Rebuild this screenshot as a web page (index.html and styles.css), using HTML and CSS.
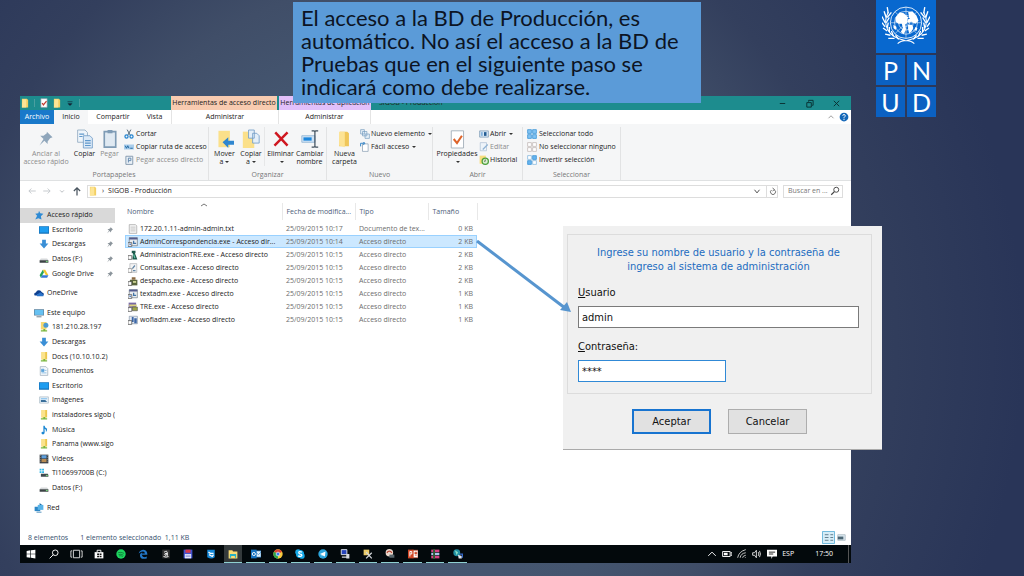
FILE: index.html
```html
<!DOCTYPE html>
<html lang="es">
<head>
    <meta charset="UTF-8">
    <meta name="viewport" content="width=device-width, initial-scale=1.0">
    <title>Acceso a SIGOB - Producción</title>
    <link rel="stylesheet" href="styles.css">
</head>
<body>

<!-- Shared icons -->
<svg class="sprite" aria-hidden="true">
    <symbol id="folder" viewBox="0 0 16 16"><path d="M3 1h8l2 2v12H3z" fill="#f3cf62"/><path d="M4 2h6v13H3z" fill="#fde596"/></symbol>
    <symbol id="desktop" viewBox="0 0 16 16"><path d="M0 2h16v12H0z" fill="#1572b8"/><path d="M1 3h14v9H1z" fill="#1e9df0"/></symbol>
    <symbol id="down" viewBox="0 0 16 16"><path d="M5 1h6v6h4l-7 8-7-8h4z" fill="#3a8fd6"/></symbol>
    <symbol id="drive" viewBox="0 0 16 16"><path d="M3 7h10l2 3H1z" fill="#d5d8da"/><path d="M1 10h14v4H1z" fill="#3b4245"/><path d="M11 11h3v2h-3z" fill="#78d07b"/></symbol>
    <symbol id="netfolder" viewBox="0 0 16 16"><path d="M4 0h9v12H4z" fill="#ecc64c"/><path d="M4 0h6v12H4z" fill="#fbe38c"/><path d="M3 13h10v2H3zM7 11h3v3H7z" fill="#79b63c"/></symbol>
    <symbol id="pin" viewBox="0 0 16 16"><path d="M9 2l5 5-2 1-2 3 0 2-3-3-5 5 4-6-3-3h3l3-2z" fill="#8b949b"/></symbol>
    <symbol id="pages" viewBox="0 0 22 24"><path d="M2 1h9l3 3v12H2z" fill="#eef5fb" stroke="#8fa9c0"/><path d="M9 8h8l3 3v12H9z" fill="#dceaf7" stroke="#6f9cc6"/><path d="M11 14h7M11 17h7M11 20h7M4 6h6M4 9h4" stroke="#5f98cc" stroke-width="1.4"/></symbol>
    <symbol id="app" viewBox="0 0 16 16"><path d="M2 1h13v13H2z" fill="#e8ebee" stroke="#64707c"/><path d="M2 1h13v3H2z" fill="#545b8e"/><path d="M8 6h2v3h3v2H8z" fill="#4375a8"/><path d="M0 9h6v6H0z" fill="#fff" stroke="#333"/><path d="M2 13l2-2M2 11h2v2" stroke="#245bb0" fill="none"/></symbol>
</svg>

<main class="slide">

    <section class="explorer">
        <header class="titlebar">
            <div class="quick">
                <svg class="icon"><use href="#folder"/></svg>
                <i></i>
                <svg class="icon" viewBox="0 0 16 16"><path d="M3 1h10v14H3z" fill="#fff" stroke="#8b9aa5"/><path d="M5 8l2 3 5-6" fill="none" stroke="#c23c30" stroke-width="2"/></svg>
                <svg class="icon"><use href="#folder"/></svg>
                <svg class="icon" viewBox="0 0 16 16"><path d="M4 6h8M5 9h6l-3 3z" stroke="#123" fill="#123"/></svg>
                <i></i>
            </div>
            <div class="context direct">Herramientas de acceso directo</div>
            <div class="context apps">Herramientas de aplicación</div>
            <div class="window-name">SIGOB - Producción</div>
            <div class="window-buttons">
                <button aria-label="Minimizar"><svg viewBox="0 0 10 10"><path d="M2 5h6" stroke="#082c2e"/></svg></button>
                <button aria-label="Restaurar"><svg viewBox="0 0 10 10"><path d="M2 4h5v5H2zM4 3V1.500h5V7H8" fill="none" stroke="#082c2e"/></svg></button>
                <button aria-label="Cerrar"><svg viewBox="0 0 10 10"><path d="M2 2l6 6M8 2L2 8" stroke="#082c2e"/></svg></button>
            </div>
        </header>

        <nav class="tabs">
            <a class="file" href="#">Archivo</a>
            <a class="active" href="#">Inicio</a>
            <a class="share" href="#">Compartir</a>
            <a class="view" href="#">Vista</a>
            <a class="manage" href="#">Administrar</a>
            <a class="manage-app" href="#">Administrar</a>
            <span class="tabs-end">
                <svg class="icon" viewBox="0 0 16 16"><path d="M4 10l4-4 4 4" fill="none" stroke="#999" stroke-width="1.500"/></svg>
                <svg class="icon" viewBox="0 0 16 16"><circle cx="8" cy="8" r="7" fill="#1467b8"/><path d="M6 6q0-2 2-2t2 2q0 1-2 3v1M8 11v2" fill="none" stroke="#fff" stroke-width="1.500"/></svg>
            </span>
        </nav>

        <div class="ribbon">
            <div class="group">
                <div class="tools">
                    <button class="big off pin-btn"><svg viewBox="0 0 22 24"><path d="M12 3l7 7-3 1-3 4 0 3-4-4-6 6 5-8-4-4h4l4-3z" fill="#8fa6bb"/></svg>Anclar al<br>acceso rápido</button>
                    <button class="big slim"><svg><use href="#pages"/></svg>Copiar</button>
                    <button class="big slim off"><svg viewBox="0 0 22 24"><path d="M4 3h14v19H4z" fill="#dfe9f2" stroke="#7e9bb5" stroke-width="2"/><path d="M8 1h6v4H8z" fill="#7e9bb5"/></svg>Pegar</button>
                    <div class="stack">
                        <button><svg class="icon" viewBox="0 0 16 16"><path d="M5 1l5 9M11 1L6 10" stroke="#4d6375" stroke-width="1.500"/><circle cx="4" cy="12" r="2.500" fill="none" stroke="#2484cf" stroke-width="2"/><circle cx="12" cy="12" r="2.500" fill="none" stroke="#2484cf" stroke-width="2"/></svg>Cortar</button>
                        <button><svg class="icon" viewBox="0 0 16 16"><path d="M0 4h16v8H0z" fill="#a9cdeb"/><path d="M2 6l2 4 2-4 2 4M10 10h4" fill="none" stroke="#1c659f" stroke-width="1.500"/></svg>Copiar ruta de acceso</button>
                        <button class="off"><svg class="icon" viewBox="0 0 16 16"><path d="M3 2h11v13H3z" fill="#eaf1f7" stroke="#8399ad" stroke-width="1.500"/><path d="M7 12V5h4v4H7" fill="none" stroke="#6086ad" stroke-width="1.500"/></svg>Pegar acceso directo</button>
                    </div>
                </div>
                <p>Portapapeles</p>
            </div>
            <div class="group">
                <div class="tools">
                    <button class="big"><svg viewBox="0 0 22 24"><path d="M3 2h14v20H3z" fill="#fbe08a"/><path d="M8 16l7-6v4h7v5h-7v4z" fill="#2f86cf"/></svg>Mover<br>a<b class="caret"></b></button>
                    <button class="big split"><svg viewBox="0 0 22 24"><path d="M1 3h14v20H1z" fill="#fbe08a"/><path d="M8 1h7v10H8zM13 5h5l3 3v9h-8z" fill="#e4eff9" stroke="#6f9cc6"/></svg>Copiar<br>a<b class="caret"></b></button>
                    <button class="big wide"><svg viewBox="0 0 22 24"><path d="M4 4l15 16M19 4L3 20" stroke="#cf1720" stroke-width="3"/></svg>Eliminar<br><b class="caret"></b></button>
                    <button class="big"><svg viewBox="0 0 22 24"><path d="M1 8h16v8H1z" fill="#cfe3f5" stroke="#8fb3d3"/><path d="M3 10h10v4H3z" fill="#1c86dc"/><path d="M17 3v18M13 2h3l1 1 1-1h3M13 22h3l1-1 1 1h3" fill="none" stroke="#40505e" stroke-width="1.500"/></svg>Cambiar<br>nombre</button>
                </div>
                <p>Organizar</p>
            </div>
            <div class="group">
                <div class="tools">
                    <button class="big wide"><svg viewBox="0 0 22 24"><path d="M6 3h9l2 2v16H5z" fill="#efc65a"/><path d="M5 3h7v19l-7-2z" fill="#fde394"/></svg>Nueva<br>carpeta</button>
                    <div class="stack tight">
                        <button><svg class="icon" viewBox="0 0 16 16"><path d="M1 1h6v7H1zM4 4h7v7H4zM8 8h7v7H8z" fill="#e6f0f8" stroke="#6b95ba"/></svg>Nuevo elemento<b class="caret"></b></button>
                        <button><svg class="icon" viewBox="0 0 16 16"><path d="M4 3h9v12H4z" fill="#fff" stroke="#7891a6"/><path d="M1 7V2h6M5 0l3 2-3 3" fill="none" stroke="#2a7fc5" stroke-width="1.500"/></svg>Fácil acceso<b class="caret"></b></button>
                    </div>
                </div>
                <p>Nuevo</p>
            </div>
            <div class="group">
                <div class="tools">
                    <button class="big props"><svg viewBox="0 0 22 24"><path d="M4 2h15v21H4z" fill="#fff" stroke="#9ba8b3"/><path d="M7 12l4 5 6-9" fill="none" stroke="#dd6329" stroke-width="2.500"/></svg>Propiedades<br><b class="caret"></b></button>
                    <div class="stack tight">
                        <button><svg class="icon" viewBox="0 0 16 16"><path d="M1 3h14v10H1z" fill="#d7e7f5" stroke="#688aa8"/><path d="M8 5h4v6H8z" fill="#245c92"/><path d="M3 5h3v6H3z" fill="#84b2dc"/></svg>Abrir<b class="caret"></b></button>
                        <button class="off"><svg class="icon" viewBox="0 0 16 16"><path d="M2 1h10v13H2z" fill="#eef4fa" stroke="#a3b9ce"/><path d="M6 12l8-8" stroke="#8fb2d4" stroke-width="2"/></svg>Editar</button>
                        <button><svg class="icon" viewBox="0 0 16 16"><path d="M1 1h10v13H1z" fill="#f7dd7d"/><circle cx="10" cy="10" r="5" fill="#d9f0d0" stroke="#4b9e3a" stroke-width="2"/><path d="M10 7v3h-2" fill="none" stroke="#333"/></svg>Historial</button>
                    </div>
                </div>
                <p>Abrir</p>
            </div>
            <div class="group">
                <div class="tools">
                    <div class="stack">
                        <button><svg class="icon" viewBox="0 0 16 16"><path d="M1 1h6v6H1zM9 1h6v6H9zM1 9h6v6H1zM9 9h6v6H9z" fill="#84c4f3" stroke="#1c83d0"/></svg>Seleccionar todo</button>
                        <button><svg class="icon" viewBox="0 0 16 16"><path d="M1 1h6v6H1zM9 1h6v6H9zM1 9h6v6H1zM9 9h6v6H9z" fill="#fff" stroke="#b5aaa6"/></svg>No seleccionar ninguno</button>
                        <button><svg class="icon" viewBox="0 0 16 16"><path d="M1 1h6v6H1zM9 9h6v6H9z" fill="#fff" stroke="#6aa8d8"/><path d="M9 1h6v6H9zM1 9h6v6H1z" fill="#68b5ef" stroke="#1c83d0"/></svg>Invertir selección</button>
                    </div>
                </div>
                <p>Seleccionar</p>
            </div>
        </div>

        <div class="navbar">
            <svg class="icon" viewBox="0 0 16 16"><path d="M14 8H3M7 4L3 8l4 4" fill="none" stroke="#c3c8cc" stroke-width="1.500"/></svg>
            <svg class="icon" viewBox="0 0 16 16"><path d="M2 8h11M9 4l4 4-4 4" fill="none" stroke="#c3c8cc" stroke-width="1.500"/></svg>
            <svg class="icon" viewBox="0 0 16 16"><path d="M5 7l3 3 3-3" fill="none" stroke="#b4b9bd" stroke-width="1.500"/></svg>
            <svg class="icon" viewBox="0 0 16 16"><path d="M8 15V3M3 8l5-5 5 5" fill="none" stroke="#48545e" stroke-width="2"/></svg>
            <div class="address">
                <svg class="icon"><use href="#folder"/></svg>
                <span>›</span>
                <span>SIGOB - Producción</span>
                <svg class="icon last" viewBox="0 0 16 16"><path d="M4 6l4 5 4-5" fill="none" stroke="#444" stroke-width="1.500"/></svg>
                <svg class="refresh" viewBox="0 0 16 16"><path d="M5 5a5 5 0 1 0 6 0M7 1l4 3-4 3" fill="none" stroke="#444" stroke-width="1.500"/></svg>
            </div>
            <label class="search">
                <input type="text" placeholder="Buscar en ..." aria-label="Buscar">
                <svg class="icon" viewBox="0 0 16 16"><circle cx="10" cy="6" r="4" fill="none" stroke="#444" stroke-width="1.500"/><path d="M7 9l-5 5" stroke="#444" stroke-width="2"/></svg>
            </label>
        </div>

        <div class="content">
            <ul class="tree">
                <li class="root selected"><a href="#"><svg class="icon" viewBox="0 0 16 16"><path d="M8 1l2 4 5 1-4 4 1 5-5-2-5 2 3-6-3-3 5-1z" fill="#2e8ad4"/></svg>Acceso rápido</a></li>
                <li><a href="#"><svg class="icon"><use href="#desktop"/></svg>Escritorio</a><svg class="pin"><use href="#pin"/></svg></li>
                <li><a href="#"><svg class="icon"><use href="#down"/></svg>Descargas</a><svg class="pin"><use href="#pin"/></svg></li>
                <li><a href="#"><svg class="icon"><use href="#drive"/></svg>Datos (F:)</a><svg class="pin"><use href="#pin"/></svg></li>
                <li><a href="#"><svg class="icon" viewBox="0 0 16 16"><path d="M6 1h4l5 9h-4z" fill="#f5c72f"/><path d="M6 1l2 4-5 9-2-4z" fill="#27a45c"/><path d="M5 10h10l-2 4H3z" fill="#3878d7"/></svg>Google Drive</a><svg class="pin"><use href="#pin"/></svg></li>
                <li class="root space"><a href="#"><svg class="icon" viewBox="0 0 16 16"><path d="M1 12q-2-4 2-5 2-5 7-3l3 3q4 1 2 5z" fill="#0d3f8f"/><path d="M5 13q-2-4 2-4 3-4 6 0 3 1 2 4z" fill="#2a73c9"/></svg>OneDrive</a></li>
                <li class="root space"><a href="#"><svg class="icon" viewBox="0 0 16 16"><path d="M0 2h16v10H0z" fill="#5d7d96"/><path d="M1 3h14v8H1z" fill="#66c1f2"/><path d="M4 13h8v2H4z" fill="#8899a5"/></svg>Este equipo</a></li>
                <li><a href="#"><svg class="icon" viewBox="0 0 16 16"><path d="M3 0h9v12H3z" fill="#f6d870"/><circle cx="11" cy="5" r="4" fill="#4a9ad4"/><path d="M3 13h10v2H3zM7 11h3v3H7z" fill="#79b63c"/></svg>181.210.28.197</a></li>
                <li><a href="#"><svg class="icon"><use href="#down"/></svg>Descargas</a></li>
                <li><a href="#"><svg class="icon"><use href="#netfolder"/></svg>Docs (10.10.10.2)</a></li>
                <li><a href="#"><svg class="icon" viewBox="0 0 16 16"><path d="M2 1h9l3 3v11H2z" fill="#f4f8fb" stroke="#8fa1b0"/><path d="M4 5h4v4H4zM4 11h8M9 7h3" fill="#5ba2d9" stroke="#5ba2d9"/></svg>Documentos</a></li>
                <li><a href="#"><svg class="icon"><use href="#desktop"/></svg>Escritorio</a></li>
                <li><a href="#"><svg class="icon" viewBox="0 0 16 16"><path d="M1 3h14v10H1z" fill="#eaf3fa" stroke="#9fb0bd"/><path d="M3 5h10v2H3z" fill="#8bc4ee"/><path d="M3 8h7l3 3H3z" fill="#396f9b"/></svg>Imágenes</a></li>
                <li><a href="#"><svg class="icon"><use href="#netfolder"/></svg>instaladores sigob (</a></li>
                <li><a href="#"><svg class="icon" viewBox="0 0 16 16"><path d="M7 1h2q0 3 4 5 0 4-2 5 1-4-2-5v6q0 3-3 3-3-1-2-3 1-2 3-1z" fill="#1b87d2"/></svg>Música</a></li>
                <li><a href="#"><svg class="icon"><use href="#netfolder"/></svg>Panama (www.sigo</a></li>
                <li><a href="#"><svg class="icon" viewBox="0 0 16 16"><path d="M1 1h14v14H1z" fill="#3b4046"/><path d="M4 2h8v5H4z" fill="#5e9edb"/><path d="M4 8h8v5H4z" fill="#b98c53"/><path d="M2 2v12M14 2v12" stroke="#ddd" stroke-dasharray="1 2"/></svg>Vídeos</a></li>
                <li><a href="#"><svg class="icon" viewBox="0 0 16 16"><path d="M1 1h3v3H1zM5 1h3v3H5zM1 5h3v3H1zM5 5h3v3H5z" fill="#30b7e8"/><path d="M3 9h11l1 2v3H3z" fill="#414a50"/><path d="M11 11h3v2h-3z" fill="#78d07b"/></svg>TI10699700B (C:)</a></li>
                <li><a href="#"><svg class="icon"><use href="#drive"/></svg>Datos (F:)</a></li>
                <li class="root space"><a href="#"><svg class="icon" viewBox="0 0 16 16"><path d="M1 6h9v7H1z" fill="#2b86c6"/><path d="M6 3h9v8H6z" fill="#58b3e8"/><path d="M9 0l4 3H9zM4 14h8v1H4z" fill="#1e6fa8"/></svg>Red</a></li>
            </ul>

            <div class="files">
                <table>
                    <colgroup><col class="c-name"><col class="c-date"><col class="c-type"><col class="c-size"></colgroup>
                    <thead>
                        <tr>
                            <th>Nombre<svg class="sort" viewBox="0 0 8 4"><path d="M1 3l3-2 3 2" fill="none" stroke="#777"/></svg></th>
                            <th>Fecha de modifica...</th><th>Tipo</th><th>Tamaño</th>
                        </tr>
                    </thead>
                    <tbody>
                        <tr><td><svg class="icon" viewBox="0 0 16 16"><path d="M2 1h10l2 2v12H2z" fill="#f5f5f5" stroke="#999"/><path d="M4 5h8M4 8h8M4 11h8" stroke="#aaa"/></svg>172.20.1.11-admin-admin.txt</td><td>25/09/2015 10:17</td><td>Documento de tex...</td><td>0 KB</td></tr>
                        <tr class="selected"><td><svg class="icon"><use href="#app"/></svg>AdminCorrespondencia.exe - Acceso dir...</td><td>25/09/2015 10:14</td><td>Acceso directo</td><td>2 KB</td></tr>
                        <tr><td><svg class="icon" viewBox="0 0 16 16"><path d="M6 1h6v4H6zM8 5h3l4 10H7z" fill="#1f5a4c"/><path d="M9 7l2 6" stroke="#5ec2a3" stroke-width="2"/><path d="M0 9h6v6H0z" fill="#fff" stroke="#333"/></svg>AdministracionTRE.exe - Acceso directo</td><td>25/09/2015 10:15</td><td>Acceso directo</td><td>2 KB</td></tr>
                        <tr><td><svg class="icon" viewBox="0 0 16 16"><path d="M3 1h11v14H3z" fill="#f4f4f4" stroke="#a8acb0"/><path d="M7 9l4-5M8 12h4" stroke="#6286a6" stroke-width="2"/><path d="M0 9h6v6H0z" fill="#fff" stroke="#777"/></svg>Consultas.exe - Acceso directo</td><td>25/09/2015 10:15</td><td>Acceso directo</td><td>2 KB</td></tr>
                        <tr><td><svg class="icon" viewBox="0 0 16 16"><path d="M3 6h12v9H3z" fill="#59653b"/><path d="M6 2h6v4H6z" fill="#8b6b43"/><path d="M8 8h5v3H8z" fill="#c9cf91"/><path d="M0 9h6v6H0z" fill="#fff" stroke="#333"/></svg>despacho.exe - Acceso directo</td><td>25/09/2015 10:15</td><td>Acceso directo</td><td>2 KB</td></tr>
                        <tr><td><svg class="icon"><use href="#app"/></svg>textadm.exe - Acceso directo</td><td>25/09/2015 10:15</td><td>Acceso directo</td><td>1 KB</td></tr>
                        <tr><td><svg class="icon" viewBox="0 0 16 16"><path d="M1 1h12v8H1z" fill="#786aa5"/><path d="M2 4h12v3H2z" fill="#ddd37e"/><path d="M7 8h8v6H7z" fill="#9fa647" stroke="#555"/><path d="M0 9h6v6H0z" fill="#fff" stroke="#333"/></svg>TRE.exe - Acceso directo</td><td>25/09/2015 10:15</td><td>Acceso directo</td><td>1 KB</td></tr>
                        <tr><td><svg class="icon" viewBox="0 0 16 16"><path d="M2 2h13v12H2z" fill="#e4eaf2" stroke="#7b8da1"/><path d="M6 3h3v8H6zM10 5h4v8h-4z" fill="#3c67a7"/><path d="M0 9h6v6H0z" fill="#fff" stroke="#333"/></svg>wofiadm.exe - Acceso directo</td><td>25/09/2015 10:15</td><td>Acceso directo</td><td>1 KB</td></tr>
                    </tbody>
                </table>
            </div>
        </div>

        <footer class="status">
            <span>8 elementos</span>
            <span>1 elemento seleccionado&nbsp; 1,11 KB</span>
            <span class="views">
                <svg viewBox="0 0 14 14"><path d="M0.500 0.500h13v13H0.500z" fill="#d5edf8" stroke="#62b3d9"/><path d="M3 4h4M3 7h4M3 10h4M9 4h3M9 7h3M9 10h3" stroke="#5c7888"/></svg>
                <svg viewBox="0 0 14 14"><path d="M3 4h8v6H3z" fill="#dbe8f0" stroke="#b5c2ca"/><path d="M3 6h6v3H3z" fill="#4a6573"/></svg>
            </span>
        </footer>

        <div class="taskbar">
            <div class="apps-row">
                <button aria-label="Inicio"><svg viewBox="0 0 16 16"><path d="M1 3l6-1v5.500H1zM8 2l7-1v6.500H8zM1 8.500h6V14l-6-1zM8 8.500h7V15l-7-1z" fill="#fff"/></svg></button>
                <button aria-label="Buscar"><svg viewBox="0 0 16 16"><circle cx="10" cy="6" r="4.500" fill="none" stroke="#fff" stroke-width="1.500"/><path d="M7 9l-6 6" stroke="#fff" stroke-width="1.500"/></svg></button>
                <button aria-label="Vista de tareas"><svg class="task-view" viewBox="0 0 20 16"><path d="M5 2h10v12H5zM3 3H1v10h2M17 3h2v10h-2" fill="none" stroke="#ddd" stroke-width="1.500"/></svg></button>
                <button aria-label="Tienda"><svg viewBox="0 0 16 16"><path d="M1 5h14v10H1z" fill="#fff"/><path d="M5 5V2h6v3" fill="none" stroke="#fff" stroke-width="1.500"/><path d="M5 7h3v3H5zM9 7h3v3H9zM5 11h3v2H5zM9 11h3v2H9z" fill="#111"/></svg></button>
                <button aria-label="Spotify"><svg viewBox="0 0 16 16"><circle cx="8" cy="8" r="7.500" fill="#1ed760"/><path d="M3 6q5-2 10 1M4 9q4-2 8 1M5 11q3-1 6 1" fill="none" stroke="#0a5a29"/></svg></button>
                <button aria-label="Edge"><svg viewBox="0 0 16 16"><path d="M1 7q2-6 8-6 6 1 6 8H6q1 4 5 4l3-1v3q-11 3-11-6 1-3 4-4-1 1-1 2h5q0-3-3-3-4 0-7 3z" fill="#2378c8"/></svg></button>
                <button aria-label="Amazon"><svg viewBox="0 0 16 16"><path d="M2 1h12v14H2z" fill="#333"/><path d="M5 5q5-3 5 1v5M10 7q-5 0-4 2 2 3 4-1M4 12q4 2 8 0" fill="none" stroke="#fff" stroke-width="1.500"/></svg></button>
                <button aria-label="Guardar"><svg viewBox="0 0 16 16"><path d="M1 1h14v14H1z" fill="#4353ce"/><path d="M4 1h8v5H4z" fill="#d83a4c"/><path d="M3 8h10v7H3z" fill="#e6e8fa"/><path d="M4 10h8M4 12h8" stroke="#7b84d3"/></svg></button>
                <button aria-label="TeamViewer"><svg viewBox="0 0 16 16"><path d="M2 1h12v12q-5 4-12 0z" fill="#1689d8"/><path d="M4 5l3 2h5M5 9l5 3 2-3" stroke="#fff" stroke-width="2" fill="none"/></svg></button>
                <button class="open current" aria-label="Explorador"><svg viewBox="0 0 16 16"><path d="M1 2h6l1 2h7v11H1z" fill="#fbdb72"/><path d="M3 8h10v6h-2v-3H5v3H3z" fill="#27b1c4"/></svg></button>
                <button class="open" aria-label="Outlook"><svg viewBox="0 0 16 16"><path d="M7 3h9v10H7z" fill="#e6f1fa" stroke="#1673c1"/><path d="M7 5l5 4 4-4" fill="none" stroke="#1673c1"/><path d="M0 1h9v14H0z" fill="#1673c1"/><circle cx="4.500" cy="8" r="2.500" fill="none" stroke="#fff" stroke-width="1.500"/></svg></button>
                <button class="open" aria-label="Chrome"><svg viewBox="0 0 16 16"><circle cx="8" cy="8" r="7.500" fill="#f8c83b"/><path d="M8 8L1.500 4.500A7.500 7.500 0 0 1 14.500 4.500z" fill="#de4335"/><path d="M8 8L1.500 4.500A7.500 7.500 0 0 0 8 15.500z" fill="#2da44e"/><circle cx="8" cy="8" r="3" fill="#3b7ded" stroke="#fff"/></svg></button>
                <button class="open" aria-label="Skype"><svg viewBox="0 0 16 16"><circle cx="5" cy="5" r="4.500" fill="#17a9e8"/><circle cx="11" cy="11" r="4.500" fill="#17a9e8"/><circle cx="8" cy="8" r="6.500" fill="#17a9e8"/><path d="M11 5q-5-2-5 1 0 1 2 2 3 0 3 2-1 3-6 1" fill="none" stroke="#fff" stroke-width="2"/></svg></button>
                <button class="open" aria-label="Telegram"><svg viewBox="0 0 16 16"><circle cx="8" cy="8" r="7.500" fill="#2ca5dc"/><path d="M3 8l9-4-1 8-4-2-1 2v-3z" fill="#fff"/></svg></button>
                <button class="open" aria-label="Escritorio remoto"><svg viewBox="0 0 16 16"><path d="M2 1h9v8H2z" fill="#2745bc" stroke="#dfe2ea" stroke-width="1.500"/><path d="M3 12h7v2H3zM10 8h5v7h-5z" fill="#d6d9df"/></svg></button>
                <button class="open" aria-label="Herramientas"><svg viewBox="0 0 16 16"><path d="M1 1h9v9H1z" fill="#eacb69"/><path d="M5 5l9 10M14 6L5 15" stroke="#d5d8db" stroke-width="2"/></svg></button>
                <button class="open" aria-label="Chat"><svg viewBox="0 0 16 16"><circle cx="7" cy="6" r="6" fill="#ead8cc"/><path d="M3 6q4-5 8 0" fill="none" stroke="#b54433" stroke-width="2"/><path d="M7 9h8v5H7z" fill="#59666c"/></svg></button>
                <button class="open" aria-label="PowerPoint"><svg viewBox="0 0 16 16"><path d="M7 2h9v12H7z" fill="#fff" stroke="#d24726"/><path d="M11 5h3v3h-3zM11 10h3" fill="#d24726" stroke="#d24726"/><path d="M0 1h9v14H0z" fill="#d24726"/><path d="M3 12V4h3v4H3" fill="none" stroke="#fff" stroke-width="1.500"/></svg></button>
                <button class="open" aria-label="WinRAR"><svg viewBox="0 0 16 16"><path d="M2 1h13v4H2z" fill="#d64080"/><path d="M2 6h13v4H2z" fill="#a9c6e9"/><path d="M2 11h13v4H2z" fill="#d64080"/><path d="M5 0h3v16H5z" fill="#2d5a33"/></svg></button>
                <button class="open" aria-label="Red"><svg viewBox="0 0 16 16"><circle cx="6" cy="6" r="5.500" fill="#228ea1"/><path d="M3 2l5 3-2 5z" fill="#8ae0c5"/><path d="M8 9l6 2v4H9z" fill="#e4e7ed"/><path d="M11 8h4v6" fill="none" stroke="#3668c8" stroke-width="2"/></svg></button>
            </div>
            <div class="tray">
                <svg viewBox="0 0 16 16"><path d="M2 11l6-6 6 6" fill="none" stroke="#fff" stroke-width="1.500"/></svg>
                <svg viewBox="0 0 16 16"><path d="M1 4h12v8H1zM14 6h2v4h-2" fill="none" stroke="#fff" stroke-width="1.500"/><path d="M3 6h6v4H3z" fill="#fff"/></svg>
                <svg viewBox="0 0 16 16"><path d="M1 14Q3 4 14 1M5 14q1-7 9-8M9 14q0-3 5-4M13 14l1-1" fill="none" stroke="#ccc" stroke-width="1.500"/></svg>
                <svg viewBox="0 0 16 16"><path d="M1 6h3l3-4v12l-3-4H1zM10 5q2 3 0 6M12 3q3 5 0 10" fill="none" stroke="#ddd" stroke-width="1.500"/></svg>
                <svg viewBox="0 0 16 16"><path d="M0 1h16v11H9l-2 4v-4H0z" fill="#fff"/><path d="M3 5h10M3 8h7" stroke="#222" stroke-width="1.500"/></svg>
                <span>ESP</span>
                <time>17:50</time>
            </div>
        </div>
    </section>

    <p class="callout">El acceso a la BD de Producción, es<br>automático. No así el acceso a la BD de<br>Pruebas que en el siguiente paso se<br>indicará como debe realizarse.</p>

    <div class="logo">
        <div class="emblem">
            <svg viewBox="0 0 46 38">
                <g fill="none" stroke="#fff">
                    <circle cx="23" cy="17" r="15" stroke-width="0.800"/>
                    <circle cx="23" cy="17" r="11" stroke-width="0.600"/>
                    <circle cx="23" cy="17" r="7" stroke-width="0.600"/>
                    <circle cx="23" cy="17" r="3.500" stroke-width="0.600"/>
                    <path d="M23 2v30M8 17h30M12.500 6.500l21 21M33.500 6.500l-21 21" stroke-width="0.500"/>
                    <path d="M6 7C0 18 5 31 22 34c4 0 7 1 9 3M40 7c6 11 1 24-16 27-4 0-7 1-9 3"/>
                    <path d="M6 8L5 2M4 12L2 6M3 17l-3-6M3 21l-3-4M5 25l-4-3M8 29l-5-1M12 32l-6 0M5 12l4-5M4 17l3-5M5 22l1-5M7 26l0-5M11 30l-2-5M16 33l-3-4M40 8l1-6M42 12l2-6M43 17l3-6M43 21l3-4M41 25l4-3M38 29l5-1M34 32l6 0M41 12l-4-5M42 17l-3-5M41 22l-1-5M39 26l0-5M35 30l2-5M30 33l3-4" stroke-width="1.300"/>
                </g>
                <path d="M21 8l-4-1-4 5 0 4 3 2 3 0 1 4-2 4 3 2 2-5-1-4 2-2 1-3 2-1-3-2zM25 7l4-1 4 4 2 5-3 3-4-2-3 1-1-3 2-3zM25 19l4 0 1 3-2 4-2 1-1-4zM32 21l2 1-1 3-2-1zM11 19l3 2-1 3-2-2z" fill="#fff"/>
            </svg>
        </div>
        <span>P</span><span>N</span><span>U</span><span>D</span>
    </div>

    <form class="login">
        <fieldset>
            <p>Ingrese su nombre de usuario y la contraseña de ingreso al sistema de administración</p>
            <label for="user"><u>U</u>suario</label>
            <input id="user" type="text" value="admin">
            <label for="pass"><u>C</u>ontraseña:</label>
            <input id="pass" class="short" type="text" value="****" autocomplete="off">
        </fieldset>
        <div class="actions">
            <button class="default" type="button">Aceptar</button>
            <button type="button">Cancelar</button>
        </div>
    </form>

    <svg class="arrow" viewBox="0 0 96 74" aria-hidden="true">
        <path d="M1 1l88 67" stroke="#5795cf" stroke-width="3"/>
        <path d="M95 72l-11-2 7-8z" fill="#5795cf"/>
    </svg>

</main>

</body>
</html>
```

FILE: styles.css
```css
* {
    box-sizing: border-box;
}
body {
    margin: 0;
    font-family: "Open Sans", "Noto Sans", sans-serif;
    font-size: 7px;
    line-height: 8px;
    color: #222;
}
button, input {
    font: inherit;
    color: inherit;
}
button {
    border: none;
    background: none;
    padding: 0;
}
a {
    color: inherit;
    text-decoration: none;
}
p {
    margin: 0;
}
svg {
    display: block;
    flex: none;
}
.sprite {
    position: absolute;
    width: 0;
    height: 0;
}
.icon {
    width: 10px;
    height: 10px;
}
.slide {
    position: relative;
    display: flex;
    min-height: 100vh;
    padding: 96px 173px 13px 20px;
    background: radial-gradient(ellipse 60% 110% at 40% 60%, #4a5c75 0%, #44556f 45%, #404e68 58%, #333f5d 74%, #293558 100%);
}

/* Explorer window */
.explorer {
    flex: 1;
    display: flex;
    flex-direction: column;
    min-width: 0;
    background: #fff;
}
.titlebar {
    display: flex;
    height: 14px;
    line-height: 13px;
    background: #1d8c8e;
}
.quick {
    display: flex;
    align-items: center;
    gap: 3px;
    width: 151px;
}
.quick i {
    width: 1px;
    height: 8px;
    margin: 0 1px;
    background: #4a9fa0;
}
.context {
    text-align: center;
    white-space: nowrap;
}
.direct {
    width: 106px;
    margin-right: 2px;
    background: #f8cbb0;
}
.apps {
    width: 92px;
    background: #e2c0fa;
}
.window-name {
    flex: 1;
    padding-left: 8px;
}
.window-buttons {
    display: flex;
    gap: 18px;
    padding-right: 10px;
}
.window-buttons svg {
    width: 9px;
    height: 9px;
}
.tabs {
    display: flex;
    height: 14px;
    line-height: 14px;
    text-align: center;
}
.file, .active {
    width: 34px;
}
.file {
    background: #1979ca;
    color: #fff;
}
.active {
    background: #f5f6f7;
}
.share {
    width: 50px;
}
.view {
    width: 33px;
}
.manage {
    width: 108px;
    border: solid #e4e4e4;
    border-width: 0 1px;
}
.manage-app {
    width: 92px;
    border-right: 1px solid #e4e4e4;
}
.tabs-end {
    display: flex;
    align-items: center;
    gap: 3px;
    margin-left: auto;
    padding-right: 2px;
}
.ribbon {
    display: grid;
    grid-template-columns: 189px 118px 106px 90px 98px;
    height: 57px;
    padding-top: 3px;
    background: #f5f6f7;
    border-bottom: 1px solid #dfe1e2;
}
.group {
    display: flex;
    flex-direction: column;
    justify-content: space-between;
    border-right: 1px solid #e2e3e4;
}
.group p {
    text-align: center;
    color: #777;
    padding-bottom: 1px;
}
.tools {
    display: flex;
    white-space: nowrap;
}
.group + .group .tools {
    padding-left: 2px;
}
.big {
    display: block;
    width: 27px;
    text-align: center;
}
.big svg {
    width: 18px;
    height: 20px;
    margin: 2px auto 1px;
}
.slim {
    width: 25px;
    align-self: flex-start;
}
.pin-btn {
    width: 52px;
}
.wide {
    width: 31px;
}
.props {
    width: 44px;
}
.split {
    border-right: 1px solid #e6e7e8;
}
.off {
    color: #8c8c8c;
}
.caret {
    display: inline-block;
    margin-left: 2px;
    border: 2px solid transparent;
    border-top-color: #333;
    border-bottom: none;
    vertical-align: 1px;
}
.stack {
    display: flex;
    flex-direction: column;
    padding-left: 2px;
}
.tight {
    padding-left: 0;
}
.stack button {
    display: flex;
    align-items: center;
    gap: 2px;
    height: 13px;
}
.tight button {
    gap: 1px;
}
.navbar {
    display: flex;
    align-items: center;
    gap: 5px;
    height: 20px;
    padding: 0 8px 0 7px;
}
.address, .search {
    display: flex;
    align-items: center;
    height: 13px;
    border: 1px solid #ddd;
}
.address {
    flex: 1;
    gap: 4px;
}
.last {
    margin-left: auto;
}
.refresh {
    width: 11px;
    height: 11px;
    padding-left: 2px;
    border-left: 1px solid #ddd;
}
.search {
    width: 60px;
    padding-left: 4px;
}
.search input {
    width: 42px;
    padding: 0;
    border: none;
    outline: none;
}
.search input::placeholder {
    color: #777;
}
.content {
    flex: 1;
    display: flex;
}
.tree {
    display: flex;
    flex-direction: column;
    width: 95px;
    margin: 0;
    padding: 7px 0 15px;
    list-style: none;
}
.tree li {
    flex: 1;
    display: flex;
    align-items: center;
    padding: 0 1px 0 19px;
    overflow: hidden;
}
.tree .root {
    padding-left: 14px;
}
.tree .space {
    margin-top: 5px;
}
.tree a {
    flex: 1;
    display: flex;
    align-items: center;
    gap: 3px;
    white-space: nowrap;
}
.tree .selected {
    background: #d9d9d9;
}
.pin {
    width: 8px;
    height: 8px;
}
.files {
    flex: 1;
    padding: 2px 0 0 10px;
}
table {
    table-layout: fixed;
    width: 352px;
    border-collapse: collapse;
}
.c-name {
    width: 157px;
}
.c-date {
    width: 73px;
}
.c-type {
    width: 73px;
}
.c-size {
    width: 49px;
}
th {
    height: 17px;
    padding: 0 4px;
    border-right: 1px solid #e8e8e8;
    text-align: left;
    font-weight: 400;
    color: #4c607a;
    white-space: nowrap;
    position: relative;
}
th:first-child {
    padding-left: 2px;
}
.sort {
    position: absolute;
    top: 0;
    left: 48%;
    width: 8px;
    height: 4px;
}
td {
    height: 13px;
    padding: 0 4px;
    color: #6d6d6d;
    white-space: nowrap;
}
td:first-child {
    display: flex;
    align-items: center;
    gap: 2px;
    padding: 0 3px;
    color: #222;
}
td:last-child {
    text-align: right;
}
tbody::before {
    content: "";
    display: block;
    height: 2px;
}
tbody .selected {
    background: #cce8ff;
    outline: 1px solid #99d1ff;
    outline-offset: -1px;
}
.status {
    display: flex;
    align-items: center;
    gap: 12px;
    height: 15px;
    padding: 0 3px 0 8px;
    color: #35506e;
}
.views {
    display: flex;
    margin-left: auto;
}
.views svg {
    width: 13px;
    height: 13px;
}

/* Taskbar */
.taskbar {
    display: flex;
    justify-content: space-between;
    height: 18px;
    background: #03090c;
    color: #fff;
}
.apps-row {
    display: grid;
    grid-template-columns: repeat(20, 1fr);
    width: 54%;
}
.apps-row button {
    display: flex;
    align-items: center;
    justify-content: center;
    margin: 0 2px;
}
.apps-row svg {
    width: 10px;
    height: 10px;
}
.apps-row .task-view {
    width: 13px;
}
.open {
    padding-top: 1px;
    border-bottom: 1px solid #8fd0d0;
}
.current {
    background: #343a3c;
}
.tray {
    display: flex;
    align-items: center;
    gap: 5px;
    margin-right: 2px;
    padding-right: 15px;
    border-right: 1px solid #555;
}
.tray svg {
    width: 10px;
    height: 10px;
}
.tray time {
    margin-left: 16px;
}

/* Items over the window */
.callout {
    position: absolute;
    top: 2px;
    left: 293px;
    width: 408px;
    padding: 4px 8px 5px;
    background: #5b9bd8;
    color: #0c1424;
    font-family: Lato, sans-serif;
    font-size: 22px;
    line-height: 23px;
    white-space: nowrap;
}
.logo {
    position: absolute;
    top: 0;
    right: 88px;
    display: grid;
    grid-template-columns: 1fr 1fr;
    gap: 2px;
    width: 60px;
    color: #fff;
    font-family: Lato, sans-serif;
    font-size: 25px;
    line-height: 30px;
    text-align: center;
}
.emblem {
    grid-column: span 2;
    height: 53px;
    padding: 5px 6px;
    background: #0868cf;
}
.logo span {
    background: #0b61c2;
}
.login {
    position: absolute;
    top: 226px;
    left: 563px;
    width: 319px;
    padding: 8px 10px 15px 4px;
    background: #f0f0f0;
    border-bottom: 1px solid #aaa;
    color: #111;
    font-family: "DejaVu Sans Condensed", "DejaVu Sans", sans-serif;
    font-size: 11px;
    line-height: 14px;
}
.login fieldset {
    margin: 0;
    padding: 11px 12px 11px 10px;
    border: 1px solid #dcdcdc;
}
.login p {
    padding: 0 8px;
    text-align: center;
    color: #1c6cc0;
}
.login label {
    display: block;
    margin: 12px 0 6px;
}
.login input {
    display: block;
    width: 100%;
    height: 22px;
    padding: 0 3px;
    border: 1px solid #7a7a7a;
    background: #fff;
}
.login label + .short {
    width: 148px;
    border-color: #3089d6;
}
.actions {
    display: flex;
    justify-content: center;
    gap: 17px;
    padding-top: 15px;
}
.actions button {
    width: 79px;
    height: 25px;
    border: 1px solid #adadad;
    background: #e1e1e1;
}
.actions .default {
    border: 2px solid #1874d0;
}
.arrow {
    position: absolute;
    top: 240px;
    left: 476px;
    width: 96px;
    height: 74px;
}
```
